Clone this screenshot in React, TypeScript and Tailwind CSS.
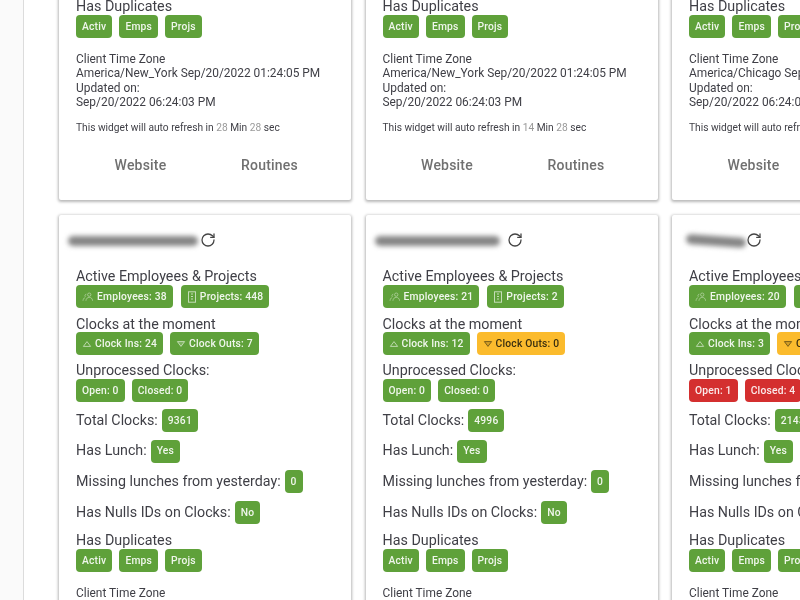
import React from "react";
import { RotateCw } from "lucide-react";

const G = "bg-[#5fa13a] text-white/90";
const R = "bg-[#d42f2f] text-white/90";
const Y = "bg-[#fbbb2d] text-[#3a2f10]";

function Badge({ c = G, icon, children }: { c?: string; icon?: React.ReactNode; children: React.ReactNode }) {
  return (
    <span className={`inline-flex h-[23px] items-center gap-[3px] rounded-[4px] px-[6px] text-[10.3px] font-medium tracking-[0.2px] whitespace-nowrap ${c}`}>
      {icon}
      {children}
    </span>
  );
}

const People = () => (
  <svg viewBox="0 0 14 12" className="h-[10px] w-[12px]" fill="none" stroke="currentColor" strokeWidth="0.9" opacity="0.6">
    <circle cx="8.5" cy="3.2" r="2" />
    <path d="M4.5 10.5c.3-3 2-4 4-4s3.7 1 4 4" />
    <path d="M5 2.6a1.8 1.8 0 0 0-1 3.2M1 10.5c.2-2 1-3.3 2.5-3.8" />
  </svg>
);
const Build = () => (
  <svg viewBox="0 0 10 12" className="h-[12px] w-[10px]" fill="none" stroke="currentColor" strokeWidth="1" opacity="0.7">
    <rect x="1.5" y="0.8" width="7" height="10.4" />
    <path d="M4 3h2M4 5.5h2M4 8h2" />
  </svg>
);
const Up = () => (
  <svg viewBox="0 0 12 10" className="h-[8px] w-[10px]" fill="none" stroke="currentColor" strokeWidth="1" opacity="0.8">
    <path d="M6 2 1.5 8h9z" />
  </svg>
);
const Down = () => (
  <svg viewBox="0 0 12 10" className="h-[8px] w-[10px]" fill="currentColor" fillOpacity="0.25" stroke="currentColor" strokeWidth="1" opacity="0.8">
    <path d="M6 8 1.5 2h9z" />
  </svg>
);

type D = {
  blur: string;
  emp: string; proj: string; ins: string; outs: string; outsC: string;
  open: string; closed: string; openC: string; total: string;
  tz: string; mins: string;
};

function Label({ children }: { children: React.ReactNode }) {
  return <div className="h-[17px] text-[14.3px] leading-[17px] whitespace-nowrap">{children}</div>;
}

function Inline({ label, value }: { label: string; value: string }) {
  return (
    <div className="flex h-[24px] items-center gap-[4px] text-[14.25px] whitespace-nowrap">
      <span>{label}</span>
      <Badge>{value}</Badge>
    </div>
  );
}

function Card({ d }: { d: D }) {
  return (
    <div className="h-[519px] w-[292px] shrink-0 rounded-[2px] bg-white px-[17px] pt-[17px] text-[#3f3f46] shadow-[0_1px_3px_1px_rgba(0,0,0,0.28)]">
      <div className="flex h-[17px] items-center">
        <div className={`h-[10px] rounded-full bg-[#858585] blur-[2.5px] ${d.blur}`} />
        <RotateCw className="-ml-[1px] -mt-[2px] h-[16px] w-[16px] text-[#444]" strokeWidth={1.9} />
      </div>
      <div className="mt-[18.5px]"><Label>Active Employees &amp; Projects</Label></div>
      <div className="mt-[0.5px] flex gap-[8px]">
        <Badge icon={<People />}>Employees: {d.emp}</Badge>
        <Badge icon={<Build />}>Projects: {d.proj}</Badge>
      </div>
      <div className="mt-[7.5px]"><Label>Clocks at the moment</Label></div>
      <div className="-mt-[0.5px] flex gap-[7px]">
        <Badge icon={<Up />}>Clock Ins: {d.ins}</Badge>
        <Badge c={d.outsC} icon={<Down />}>Clock Outs: {d.outs}</Badge>
      </div>
      <div className="mt-[6.5px]"><Label>Unprocessed Clocks:</Label></div>
      <div className="mt-[0.5px] flex gap-[7px]">
        <Badge c={d.openC}>Open: {d.open}</Badge>
        <Badge c={d.openC}>Closed: {d.closed}</Badge>
      </div>
      <div className="mt-[6.5px] flex flex-col gap-[6.6px]">
        <Inline label="Total Clocks:" value={d.total} />
        <Inline label="Has Lunch:" value="Yes" />
        <Inline label="Missing lunches from yesterday:" value="0" />
        <Inline label="Has Nulls IDs on Clocks:" value="No" />
      </div>
      <div className="mt-[8px]"><Label>Has Duplicates</Label></div>
      <div className="mt-[0.2px] flex gap-[7px]">
        <Badge>Activ</Badge>
        <Badge>Emps</Badge>
        <Badge>Projs</Badge>
      </div>
      <div className="mt-[13.5px] text-[11.9px] leading-[14.4px] whitespace-nowrap">
        <div>Client Time Zone</div>
        <div>{d.tz} Sep/20/2022 01:24:05 PM</div>
        <div>Updated on:</div>
        <div>Sep/20/2022 06:24:03 PM</div>
      </div>
      <div className="mt-[12px] text-[10.2px] leading-[12px] whitespace-nowrap">
        This widget will auto refresh in <span className="text-[#999]">{d.mins}</span> Min <span className="text-[#999]">28</span> sec
      </div>
      <div className="mt-[21.5px] flex text-[14px] font-medium tracking-[0.2px] text-[#707070]">
        <span className="w-[129px] text-center">Website</span>
        <span className="w-[129px] text-center">Routines</span>
      </div>
    </div>
  );
}

const A: D = { blur: "-ml-[8px] mr-[3px] w-[130px]", emp: "38", proj: "448", ins: "24", outs: "7", outsC: G, open: "0", closed: "0", openC: G, total: "9361", tz: "America/New_York", mins: "28" };
const B: D = { blur: "-ml-[8px] mr-[8px] w-[125px]", emp: "21", proj: "2", ins: "12", outs: "0", outsC: Y, open: "0", closed: "0", openC: G, total: "4996", tz: "America/New_York", mins: "14" };
const C: D = { blur: "-ml-[3px] mr-[1px] w-[60px] rotate-[4deg]", emp: "20", proj: "5", ins: "3", outs: "0", outsC: Y, open: "1", closed: "4", openC: R, total: "2143", tz: "America/Chicago", mins: "9" };

export default function App() {
  return (
    <div className="flex h-[600px] w-[800px] overflow-hidden bg-white font-['Roboto',sans-serif] blur-[0.45px]">
      <div className="w-[24px] shrink-0 border-r border-[#dcdcdc] bg-[#fafafa]" />
      <div className="ml-[35px] -mt-[319px] flex flex-col gap-[15px]">
        <div className="flex gap-[14.5px]">
          <Card d={A} />
          <Card d={B} />
          <Card d={C} />
        </div>
        <div className="flex gap-[14.5px]">
          <Card d={A} />
          <Card d={B} />
          <Card d={C} />
        </div>
      </div>
    </div>
  );
}
